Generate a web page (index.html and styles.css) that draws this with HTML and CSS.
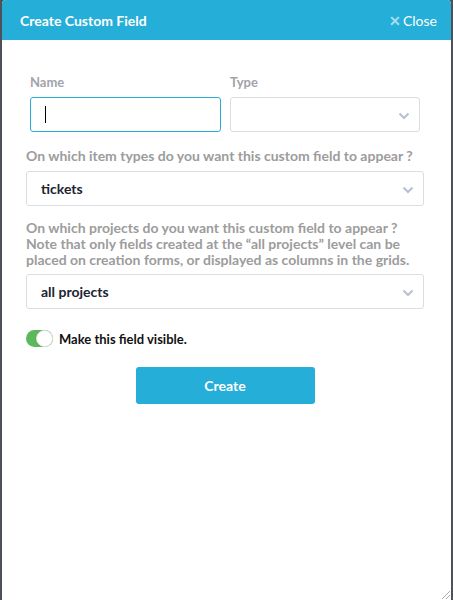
FILE: index.html
```html
<!DOCTYPE html>
<html>
<head>
<meta charset="utf-8">
<link rel="stylesheet" href="styles.css">
</head>
<body>
<div class="dialog">
  <div class="header">
    <span class="title">Create Custom Field</span>
    <span class="close"><span class="x">✕</span>Close</span>
  </div>
  <div class="content">
    <div class="row2">
      <div class="col name-col">
        <label class="lbl">Name</label>
        <div class="input focused"><span class="caret"></span></div>
      </div>
      <div class="col type-col">
        <label class="lbl">Type</label>
        <div class="input select"><svg class="chev" width="12" height="8" viewBox="0 0 12 8"><path d="M1.5 1.5 L6 6 L10.5 1.5" fill="none" stroke="#b8bfd0" stroke-width="2"/></svg></div>
      </div>
    </div>
    <p class="q q1">On which item types do you want this custom field to appear ?</p>
    <div class="input select wide"><span class="val">tickets</span><svg class="chev" width="12" height="8" viewBox="0 0 12 8"><path d="M1.5 1.5 L6 6 L10.5 1.5" fill="none" stroke="#b8bfd0" stroke-width="2"/></svg></div>
    <p class="q q2">On which projects do you want this custom field to appear ?<br>Note that only fields created at the “all projects” level can be placed on creation forms, or displayed as columns in the grids.</p>
    <div class="input select wide"><span class="val">all projects</span><svg class="chev" width="12" height="8" viewBox="0 0 12 8"><path d="M1.5 1.5 L6 6 L10.5 1.5" fill="none" stroke="#b8bfd0" stroke-width="2"/></svg></div>
    <div class="toggle-row">
      <span class="toggle"><span class="knob"></span></span>
      <span class="toggle-lbl">Make this field visible.</span>
    </div>
    <div class="btn-row"><button class="btn">Create</button></div>
  </div>
  <svg class="grip" width="12" height="12" viewBox="0 0 12 12"><path d="M11 3 L3 11 M11 7 L7 11" stroke="#aaa" stroke-width="1"/></svg>
</div>
</body>
</html>
```
FILE: styles.css
```css
html, body { margin: 0; padding: 0; }
body {
  background: #4c5258;
  width: 453px;
  height: 600px;
  overflow: hidden;
  font-family: Lato, "Noto Sans", sans-serif;
}
.dialog {
  position: relative;
  margin: 0 2px;
  height: 600px;
  background: #fff;
  border-radius: 4px 4px 0 0;
  overflow: hidden;
}
.header {
  height: 40px;
  background: #25aed7;
  display: flex;
  align-items: center;
  justify-content: space-between;
  padding: 0 14px 0 18px;
  color: #fff;
}
.title { font-weight: 700; font-size: 14px; }
.close { font-size: 14px; display: flex; align-items: center; }
.close .x { color: rgba(255,255,255,0.6); font-weight: 700; margin-right: 2px; font-size: 14px; }
.content { padding: 34px 26px 0 24px; }
.row2 { display: flex; gap: 9px; padding-left: 4px; padding-right: 4px; }
.col { display: flex; flex-direction: column; }
.name-col { width: 191px; }
.type-col { width: 190px; }
.lbl { font-size: 13px; font-weight: 700; color: #a3a3ab; height: 16px; line-height: 16px; margin-bottom: 7px; }
.input {
  box-sizing: border-box;
  height: 35px;
  border: 1px solid #dcdde4;
  border-radius: 3px;
  background: #fff;
  display: flex;
  align-items: center;
  position: relative;
}
.input.focused { border-color: #29aedb; }
.caret { display: block; width: 1px; height: 17px; background: #000; margin-left: 14px; }
.select .chev { position: absolute; right: 9px; top: 14px; }
.wide { width: 398px; }
.val { font-size: 14px; font-weight: 700; color: #202332; margin-left: 14px; }
.q { margin: 0; font-size: 14px; font-weight: 700; color: #9c9c9c; line-height: 16px; }
.q1 { margin-top: 16px; margin-bottom: 7px; }
.q2 { margin-top: 14px; margin-bottom: 6px; }
.toggle-row { display: flex; align-items: center; margin-top: 21px; }
.toggle {
  width: 27px; height: 17px; border-radius: 9px; background: #5cb85c; position: relative; box-sizing: border-box;
}
.knob {
  position: absolute; right: 0; top: 0; width: 17px; height: 17px; border-radius: 50%; background: #fff; box-sizing: border-box; border: 1px solid #e4e4e4; box-shadow: 0 0 1px rgba(0,0,0,0.15);
}
.toggle-lbl { margin-left: 6px; font-size: 13px; font-weight: 700; color: #111; }
.btn-row { display: flex; justify-content: center; margin-top: 20px; padding-right: 1px; }
.btn {
  width: 179px; height: 37px; background: #25aed7; border: none; border-radius: 3px; color: #fff; font-family: Lato, sans-serif; font-weight: 700; font-size: 14px;
}
.grip { position: absolute; right: 0; bottom: 0; }
```
